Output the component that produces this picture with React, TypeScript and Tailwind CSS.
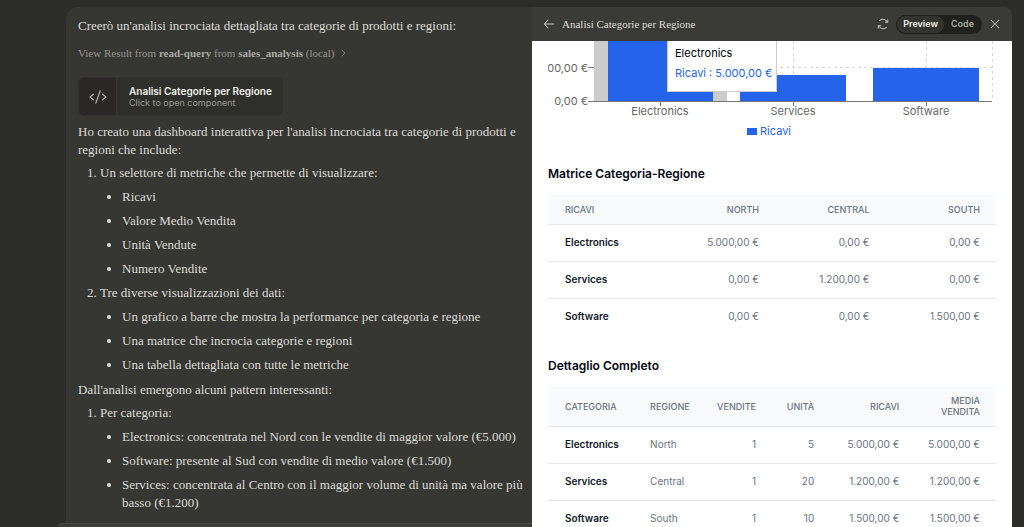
import React from 'react';
import { PiArrowLeft, PiArrowsClockwise, PiCaretRight, PiCode, PiX } from 'react-icons/pi';

const metrics = ['Ricavi', 'Valore Medio Vendita', 'Unità Vendute', 'Numero Vendite'];

const views = [
  'Un grafico a barre che mostra la performance per categoria e regione',
  'Una matrice che incrocia categorie e regioni',
  'Una tabella dettagliata con tutte le metriche',
];

const categories = [
  'Electronics: concentrata nel Nord con le vendite di maggior valore (€5.000)',
  'Software: presente al Sud con vendite di medio valore (€1.500)',
  'Services: concentrata al Centro con il maggior volume di unità ma valore più basso (€1.200)',
];

const matrix = [
  { name: 'Electronics', values: ['5.000,00 €', '0,00 €', '0,00 €'] },
  { name: 'Services', values: ['0,00 €', '1.200,00 €', '0,00 €'] },
  { name: 'Software', values: ['0,00 €', '0,00 €', '1.500,00 €'] },
];

const details = [
  { name: 'Electronics', region: 'North', values: ['1', '5', '5.000,00 €', '5.000,00 €'] },
  { name: 'Services', region: 'Central', values: ['1', '20', '1.200,00 €', '1.200,00 €'] },
  { name: 'Software', region: 'South', values: ['1', '10', '1.500,00 €', '1.500,00 €'] },
];

const BulletList: React.FC<{ items: string[] }> = ({ items }) => (
  <ul className="mt-1.5 list-disc space-y-1.5 pl-[22px]">
    {items.map((item) => (
      <li key={item}>{item}</li>
    ))}
  </ul>
);

const Chat: React.FC = () => (
  <div className="flex min-h-0 min-w-0 flex-col">
    <div className="min-h-0 flex-1 overflow-hidden pl-[66px]">
      <div className="rounded-tl-xl bg-[#363633] pt-[10px] pr-1 pb-6 pl-3 font-['Liberation_Serif',serif] text-[13px] leading-[18px] text-[#dddcd5]">
        <p>Creerò un'analisi incrociata dettagliata tra categorie di prodotti e regioni:</p>

        <button type="button" className="mt-[9px] flex items-center text-[11px] leading-[18px] text-[#96958f]">
          <span>
            View Result from <span className="font-bold text-[#aaa9a2]">read-query</span> from{' '}
            <span className="font-bold text-[#aaa9a2]">sales_analysis</span> (local)
          </span>
          <PiCaretRight className="ml-1 size-2.5" />
        </button>

        {/* Artifact card */}
        <button
          type="button"
          className="mt-[15px] flex h-[39px] items-stretch overflow-hidden rounded-md border border-[#30302d] bg-[#2e2e2b] text-left font-[Inter,sans-serif]"
        >
          <span className="flex w-[38px] items-center justify-center border-r border-[#363633] bg-[#2b2827] text-[#b5b4ae]">
            <PiCode className="size-[18px]" />
          </span>
          <span className="flex flex-col justify-center pr-2.5 pl-3">
            <span className="text-[10px] leading-3 font-semibold text-[#f1f0ea]">Analisi Categorie per Regione</span>
            <span className="text-[9px] leading-3 text-[#9b9a94]">Click to open component</span>
          </span>
        </button>

        <p className="mt-[7px]">
          Ho creato una dashboard interattiva per l'analisi incrociata tra categorie di prodotti e regioni che include:
        </p>
        <ol className="mt-[5px] list-decimal space-y-1.5 pl-[22px]">
          <li>
            Un selettore di metriche che permette di visualizzare:
            <BulletList items={metrics} />
          </li>
          <li>
            Tre diverse visualizzazioni dei dati:
            <BulletList items={views} />
          </li>
        </ol>

        <p className="mt-[7px]">Dall'analisi emergono alcuni pattern interessanti:</p>
        <ol className="mt-[5px] list-decimal space-y-1.5 pl-[22px]">
          <li>
            Per categoria:
            <BulletList items={categories} />
          </li>
          <li>Per regione:</li>
        </ol>
      </div>
    </div>

    {/* Top edge of the message composer */}
    <div className="ml-[58px] h-1 shrink-0 rounded-tl-lg border-t border-[#464642] bg-[#3a3a37]" />
  </div>
);

const Chart: React.FC = () => (
  <div className="relative">
    <svg viewBox="0 0 448 98" className="block w-full font-[Inter,sans-serif] text-[11px]" role="img" aria-label="Ricavi">
      <path d="M46 26.5H444M112.5 0V60M245.5 0V60M378.5 0V60M444.5 0V60" stroke="#d9d9d9" strokeDasharray="3 3" />
      <rect x="46" y="0" width="133" height="60" fill="#cccccc" />
      <g fill="#2563eb">
        <rect x="60" y="0" width="105" height="60" />
        <rect x="192" y="34" width="106" height="26" />
        <rect x="325" y="27" width="106" height="33" />
      </g>
      <path d="M40 60.5H444M40 26.5H46M112.5 60V65M245.5 60V65M378.5 60V65" stroke="#777777" fill="none" />
      <g fill="#666666">
        <text x="40" y="31" textAnchor="end">00,00 €</text>
        <text x="40" y="64" textAnchor="end">0,00 €</text>
        <text x="112" y="74" textAnchor="middle">Electronics</text>
        <text x="245" y="74" textAnchor="middle">Services</text>
        <text x="378" y="74" textAnchor="middle">Software</text>
      </g>
      <rect x="199" y="87" width="10" height="7" fill="#2563eb" />
      <text x="212" y="94" fill="#2563eb">Ricavi</text>
    </svg>

    {/* Hover tooltip */}
    <div className="absolute top-0 left-[119px] h-[51px] border border-t-0 border-[#cccccc] bg-white pt-[2px] pr-1 pl-[7px] text-[11px] leading-5 whitespace-nowrap">
      <p className="text-black">Electronics</p>
      <p className="text-[#2563eb]">Ricavi : 5.000,00 €</p>
    </div>
  </div>
);

const thLeftClass = 'pl-[17px] text-left font-medium text-gray-500 uppercase';
const thClass = 'pr-4 pl-2 text-right font-medium text-gray-500 uppercase';
const tdClass = 'h-[37px] pr-4 text-right whitespace-nowrap text-gray-500';
const nameClass = 'h-[37px] pl-[17px] text-left font-semibold whitespace-nowrap text-gray-900';

const MatrixTable: React.FC = () => (
  <table className="mt-3 w-full table-fixed text-[10px]">
    <thead className="bg-gray-50 text-[9px] leading-[11px]">
      <tr className="h-[29px] border-b border-gray-200">
        <th scope="col" className={`w-[26%] ${thLeftClass}`}>Ricavi</th>
        <th scope="col" className={thClass}>North</th>
        <th scope="col" className={thClass}>Central</th>
        <th scope="col" className={thClass}>South</th>
      </tr>
    </thead>
    <tbody className="divide-y divide-gray-200">
      {matrix.map((row) => (
        <tr key={row.name}>
          <th scope="row" className={nameClass}>{row.name}</th>
          {row.values.map((value, index) => (
            <td key={index} className={tdClass}>{value}</td>
          ))}
        </tr>
      ))}
    </tbody>
  </table>
);

const DetailTable: React.FC = () => (
  <table className="mt-3 w-full table-fixed text-[10px]">
    <colgroup>
      <col className="w-[19%]" />
      <col className="w-[16%]" />
      <col className="w-[15%]" />
      <col className="w-[13%]" />
      <col className="w-[19%]" />
      <col className="w-[18%]" />
    </colgroup>
    <thead className="bg-gray-50 text-[9px] leading-[11px]">
      <tr className="h-[39px] border-b border-gray-200">
        <th scope="col" className={thLeftClass}>Categoria</th>
        <th scope="col" className={thLeftClass}>Regione</th>
        <th scope="col" className={thClass}>Vendite</th>
        <th scope="col" className={thClass}>Unità</th>
        <th scope="col" className={thClass}>Ricavi</th>
        <th scope="col" className={thClass}>Media Vendita</th>
      </tr>
    </thead>
    <tbody className="divide-y divide-gray-200">
      {details.map((row) => (
        <tr key={row.name}>
          <th scope="row" className={nameClass}>{row.name}</th>
          <td className="pl-[17px] text-left text-gray-500">{row.region}</td>
          {row.values.map((value, index) => (
            <td key={index} className={tdClass}>{value}</td>
          ))}
        </tr>
      ))}
    </tbody>
  </table>
);

const Preview: React.FC = () => (
  <div className="flex min-h-0 min-w-0 flex-col">
    <header className="flex h-[34px] shrink-0 items-center rounded-tr-lg bg-[#3a3a37] px-[10px] text-[#c8c7c0]">
      <button type="button" aria-label="Indietro">
        <PiArrowLeft className="size-3.5" />
      </button>
      <h1 className="ml-1.5 flex-1 truncate font-['Liberation_Serif',serif] text-[11px] text-[#dddcd5]">
        Analisi Categorie per Regione
      </h1>
      <button type="button" aria-label="Ricarica">
        <PiArrowsClockwise className="size-3.5" />
      </button>
      <div className="ml-1.5 flex h-[19px] rounded-full bg-[#20201d] text-[9px] font-semibold">
        <button type="button" className="rounded-full border border-[#20201d] bg-[#33332f] px-1.5 text-[#f1f0ea]">Preview</button>
        <button type="button" className="pr-2 pl-1.5 text-[#aaa9a2]">Code</button>
      </div>
      <button type="button" aria-label="Chiudi" className="ml-1.5">
        <PiX className="size-3.5" />
      </button>
    </header>

    <main className="min-h-0 flex-1 overflow-hidden bg-white px-4">
      <Chart />
      <section className="mt-[26px]">
        <h2 className="text-[12px] leading-[18px] font-semibold text-gray-950">Matrice Categoria-Regione</h2>
        <MatrixTable />
      </section>
      <section className="mt-[22px]">
        <h2 className="text-[12px] leading-[18px] font-semibold text-gray-950">Dettaglio Completo</h2>
        <DetailTable />
      </section>
    </main>
  </div>
);

const App: React.FC = () => {
  return (
    <div className="grid h-screen grid-cols-[532fr_480fr] grid-rows-1 overflow-hidden bg-[#2c2c29] pt-[7px] pr-3 font-[Inter,sans-serif]">
      <Chat />
      <Preview />
    </div>
  );
};

export default App;
